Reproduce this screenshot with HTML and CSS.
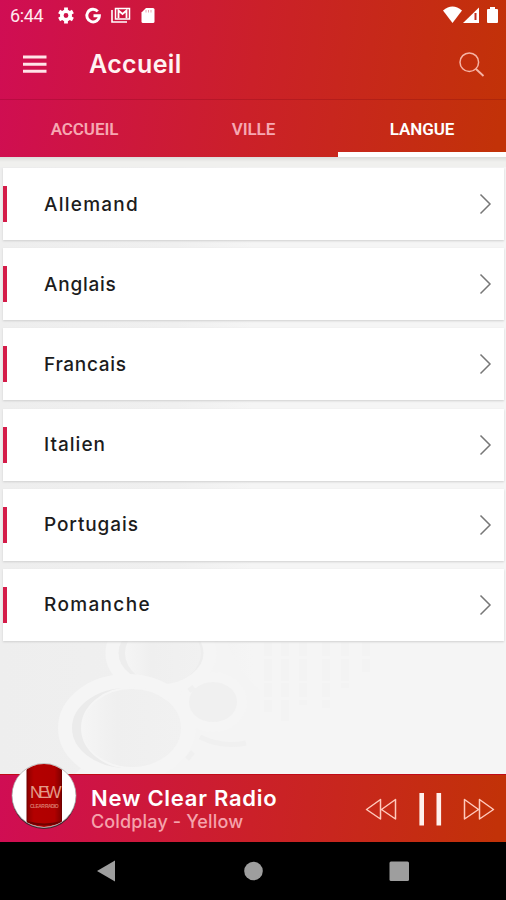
FILE: index.html
```
<!DOCTYPE html>
<html lang="fr">
<head>
<meta charset="utf-8">
<title>Accueil</title>
<link rel="stylesheet" href="styles.css">
</head>
<body>
<div class="phone">
  <header class="header">
    <div class="status">
      <span class="clock">6:44</span>
      <svg class="status-left" width="100" height="20" viewBox="56 6 100 20">
        <g fill="none" stroke="#fff">
          <circle cx="66" cy="15.500" r="4.200" stroke-width="3.600"/>
          <path d="M66 11V7.500M66 20v3.500M62.100 13.250L59.100 11.500M69.900 17.750l3 1.750M62.100 17.750l-3 1.750M69.900 13.250l3-1.750" stroke-width="3.800"/>
          <path d="M97.800 11.400A6.300 6.300 0 1 0 99.400 15.800H93.500" stroke-width="2.900"/>
          <path d="M112 10v12h15" stroke-width="1.600"/>
          <rect x="115.500" y="8.500" width="14" height="10.500" stroke-width="1.500"/>
          <path d="M118.500 18V10.500l4 3.500 4-3.500V18" stroke-width="1.800"/>
        </g>
        <path d="M141.500 12.500l4.500-4.500h7q1.500 0 1.500 1.500v12q0 1.500-1.500 1.500h-10q-1.500 0-1.500-1.500z" fill="#fff"/>
        <path d="M146 10v2.500m2.500-2.500v2.500m2.500-2.500v2.500" stroke="#e7a5b0" stroke-width="1"/>
      </svg>
      <svg class="status-right" width="58" height="20" viewBox="442 6 58 20">
        <path d="M443 10.500Q452.500 2.500 462 10.500L452.500 23z" fill="#fff"/>
        <path d="M463 23L479 7.500V23z" fill="#fff"/>
        <path d="M475.500 13v7" stroke="#c42d20" stroke-width="2"/>
        <path d="M488 9h2V7h5v2h2q1 0 1 1v12q0 1-1 1h-9q-1 0-1-1V10q0-1 1-1z" fill="#fff"/>
      </svg>
    </div>
    <div class="toolbar">
      <svg class="menu" width="24" height="18" viewBox="0 0 24 18"><path d="M0 2h23.500M0 9.300h23.500M0 16.300h23.500" stroke="#ffe4e8" stroke-width="2.900"/></svg>
      <h1 class="title">Accueil</h1>
      <svg class="search" width="26" height="26" viewBox="459 51 26 26"><g fill="none" stroke="#f6b3a5" stroke-width="1.500"><circle cx="469.300" cy="62.200" r="9.300"/><path d="M476 69l7.500 7" stroke-width="1.900"/></g></svg>
    </div>
    <nav class="tabs">
      <span class="tab">ACCUEIL</span>
      <span class="tab">VILLE</span>
      <span class="tab active">LANGUE</span>
    </nav>
  </header>
  <main class="content">
    <svg class="backdrop" width="506" height="616" viewBox="0 158 506 616">
      <defs>
        <linearGradient id="wash"><stop offset="0" stop-color="#eeeeee"/><stop offset=".35" stop-color="#f0f0f0"/><stop offset=".5" stop-color="#f5f5f5"/><stop offset="1" stop-color="#f5f5f5"/></linearGradient>
        <linearGradient id="disc"><stop offset="0" stop-color="#f5f5f5"/><stop offset=".35" stop-color="#efefef"/><stop offset="1" stop-color="#f1f1f1"/></linearGradient>
      </defs>
      <path d="M0 158h506v616H0z" fill="url(#wash)"/>
      <path d="M225 635q10 35 35 55v84H75l90-90z" fill="#f4f4f4"/>
      <g stroke="#f5f5f5">
        <ellipse cx="161" cy="653" rx="49" ry="37" fill="#ededed" stroke-width="13"/>
        <ellipse cx="163" cy="653" rx="38" ry="31" fill="url(#disc)" stroke="none"/>
        <ellipse cx="127" cy="728" rx="62" ry="47" fill="#ebebeb" stroke-width="14"/>
        <ellipse cx="132" cy="728" rx="50" ry="40" fill="url(#disc)" stroke="#f5f5f5" stroke-width="2"/>
        <ellipse cx="213" cy="702" rx="29" ry="25" fill="#f0f0f0" stroke-width="10"/>
      </g>
      <path d="M200 737q22 11 46 6M187 759l6-7M189 691l5-4" fill="none" stroke="#f0f0f0" stroke-width="5"/>
      <path d="M268 642v70M285 642v79M303 642v63M326 642v66M345 642v46M366 642v30" stroke="#f3f3f3" stroke-width="8" stroke-dasharray="14 3 22 2"/>
    </svg>
    <ul class="list">
      <li class="card"><span class="name n1">Allemand</span><svg class="chevron" width="14" height="22" viewBox="0 0 14 22"><path d="M1.500 1.500L11 11l-9.500 9.500"/></svg></li>
      <li class="card"><span class="name n2">Anglais</span><svg class="chevron" width="14" height="22" viewBox="0 0 14 22"><path d="M1.500 1.500L11 11l-9.500 9.500"/></svg></li>
      <li class="card"><span class="name n3">Francais</span><svg class="chevron" width="14" height="22" viewBox="0 0 14 22"><path d="M1.500 1.500L11 11l-9.500 9.500"/></svg></li>
      <li class="card"><span class="name n4">Italien</span><svg class="chevron" width="14" height="22" viewBox="0 0 14 22"><path d="M1.500 1.500L11 11l-9.500 9.500"/></svg></li>
      <li class="card"><span class="name n5">Portugais</span><svg class="chevron" width="14" height="22" viewBox="0 0 14 22"><path d="M1.500 1.500L11 11l-9.500 9.500"/></svg></li>
      <li class="card"><span class="name n6">Romanche</span><svg class="chevron" width="14" height="22" viewBox="0 0 14 22"><path d="M1.500 1.500L11 11l-9.500 9.500"/></svg></li>
    </ul>
  </main>
  <footer class="player">
    <svg class="logo" width="68" height="68" viewBox="10 762 68 68">
      <defs>
        <clipPath id="round"><circle cx="44" cy="795.500" r="31.500"/></clipPath>
        <linearGradient id="can"><stop offset="0" stop-color="#8e0000"/><stop offset=".2" stop-color="#b30000"/><stop offset=".8" stop-color="#b00000"/><stop offset="1" stop-color="#800000"/></linearGradient>
      </defs>
      <circle cx="44" cy="797" r="32" fill="#40222b"/>
      <circle cx="44" cy="795.500" r="32" fill="#fff" stroke="#aaa" stroke-width=".7"/>
      <g clip-path="url(#round)">
        <path d="M27 762h34.500v68H27z" fill="url(#can)" stroke="#710000"/>
        <path d="M27 822q17 5 34.500 0" fill="none" stroke="#720000" stroke-width="2"/>
      </g>
      <text class="logo-big" x="30" y="798">NEW</text>
      <text class="logo-small" x="30" y="807.500">CLEAR RADIO</text>
    </svg>
    <div class="track">
      <div class="station">New Clear Radio</div>
      <div class="song">Coldplay - Yellow</div>
    </div>
    <svg class="controls" width="134" height="40" viewBox="364 789 134 40">
      <g fill="none" stroke="#ffc9bc" stroke-width="1.500" stroke-linejoin="round">
        <path d="M366.500 809.500L380.500 799.500V819zM381.500 809.500L395.500 799.500V819z"/>
        <path d="M493.500 809.500L479.500 799.500V819zM478.500 809.500L464.500 799.500V819z"/>
      </g>
      <path d="M421.700 793v32.500M438.800 793v32.500" stroke="#fff0ec" stroke-width="4.600"/>
    </svg>
  </footer>
  <div class="navbar">
    <svg width="506" height="58" viewBox="0 842 506 58" fill="#9e9e9e"><path d="M97 871L115 860.500V881.500z"/><circle cx="253.500" cy="871" r="9.300"/><rect x="389.500" y="861.500" width="19.500" height="19.500" rx="1.500"/></svg>
  </div>
</div>
</body>
</html>
```
FILE: styles.css
```
* { box-sizing: border-box; }
body { margin: 0; font-family: Inter, "Liberation Sans", sans-serif; }
svg { display: block; flex: none; }
.phone { width: 506px; height: 900px; display: flex; flex-direction: column; overflow: hidden; background: #000; }

.header { height: 157px; flex: none; background: linear-gradient(98deg, #d00d54 0%, #cb2029 50%, #c23208 98%); }
.status { height: 32px; padding: 6px 6px 0 10px; display: flex; align-items: flex-start; }
.clock { width: 46px; font: 18px/20px Roboto, sans-serif; color: #ffe9ee; letter-spacing: -.4px; }
.status-right { margin-left: auto; }
.toolbar { height: 68px; padding: 0 21px 0 23px; display: flex; align-items: center; border-bottom: 1px solid rgba(110, 0, 20, .22); }
.menu { margin-top: -4px; }
.title { margin: -4px 0 0 42px; font-size: 25px; line-height: 32px; font-weight: 600; letter-spacing: .35px; color: #fff3f3; white-space: nowrap; }
.search { margin: -4px 0 0 auto; }
.tabs { height: 57px; display: grid; grid-template-columns: 169px 169px 168px; }
.tab { display: flex; align-items: center; justify-content: center; border-bottom: 0 solid #fff; font: 600 17px/20px Roboto, sans-serif; letter-spacing: -.1px; color: #f6a8b2; }
.tab.active { color: #fff; border-bottom-width: 5px; padding-top: 5px; }

.content { position: relative; height: 617px; flex: none; background: #f2f2f1; }
.backdrop { position: absolute; left: 0; top: 1px; z-index: 0; }
.list { position: relative; list-style: none; margin: 0; padding: 11px 2px 0 3px; display: flex; flex-direction: column; gap: 8.200px; background: linear-gradient(#dcdcda, #f0f0ee 50%) no-repeat 0 0 / 100% 10px; }
.card { height: 72px; display: flex; align-items: center; padding: 0 11px 0 0; background: #fff; box-shadow: 0 1px 2px #cfcfcf; }
.card::before { content: ""; width: 4px; height: 36px; background: #d41c49; flex: none; }
.name { margin: 1px 0 0 37px; font-size: 19px; line-height: 26px; font-weight: 500; color: #1c1c1c; white-space: nowrap; }
.n1 { letter-spacing: 1.250px; }
.n2 { letter-spacing: .75px; }
.n3 { letter-spacing: .7px; }
.n4 { letter-spacing: 1px; }
.n5 { letter-spacing: .9px; }
.n6 { letter-spacing: 1.350px; }
.chevron { margin-left: auto; fill: none; stroke: #777; stroke-width: 1.500; }

.player { height: 68px; flex: none; position: relative; display: flex; background: linear-gradient(97deg, #d00d54 0%, #cb2029 50%, #c23208 98%); border-top: 1px solid #c00b18; }
.logo { margin: -13px 0 0 10px; }
.logo-big { font: 17px "Liberation Sans", sans-serif; letter-spacing: -4px; fill: #e39a88; }
.logo-small { font: 700 5px "Liberation Sans", sans-serif; letter-spacing: -.6px; fill: #d97868; }
.track { margin: 9px 0 0 13px; white-space: nowrap; }
.station { font-size: 22px; line-height: 28px; font-weight: 600; letter-spacing: .75px; color: #fff; }
.song { font-size: 18px; line-height: 22px; margin-top: -1px; font-weight: 500; letter-spacing: .15px; color: #f5a3ac; }
.controls { margin: 14px 8px 0 auto; }
.navbar { height: 58px; flex: none; background: #000; }
```
